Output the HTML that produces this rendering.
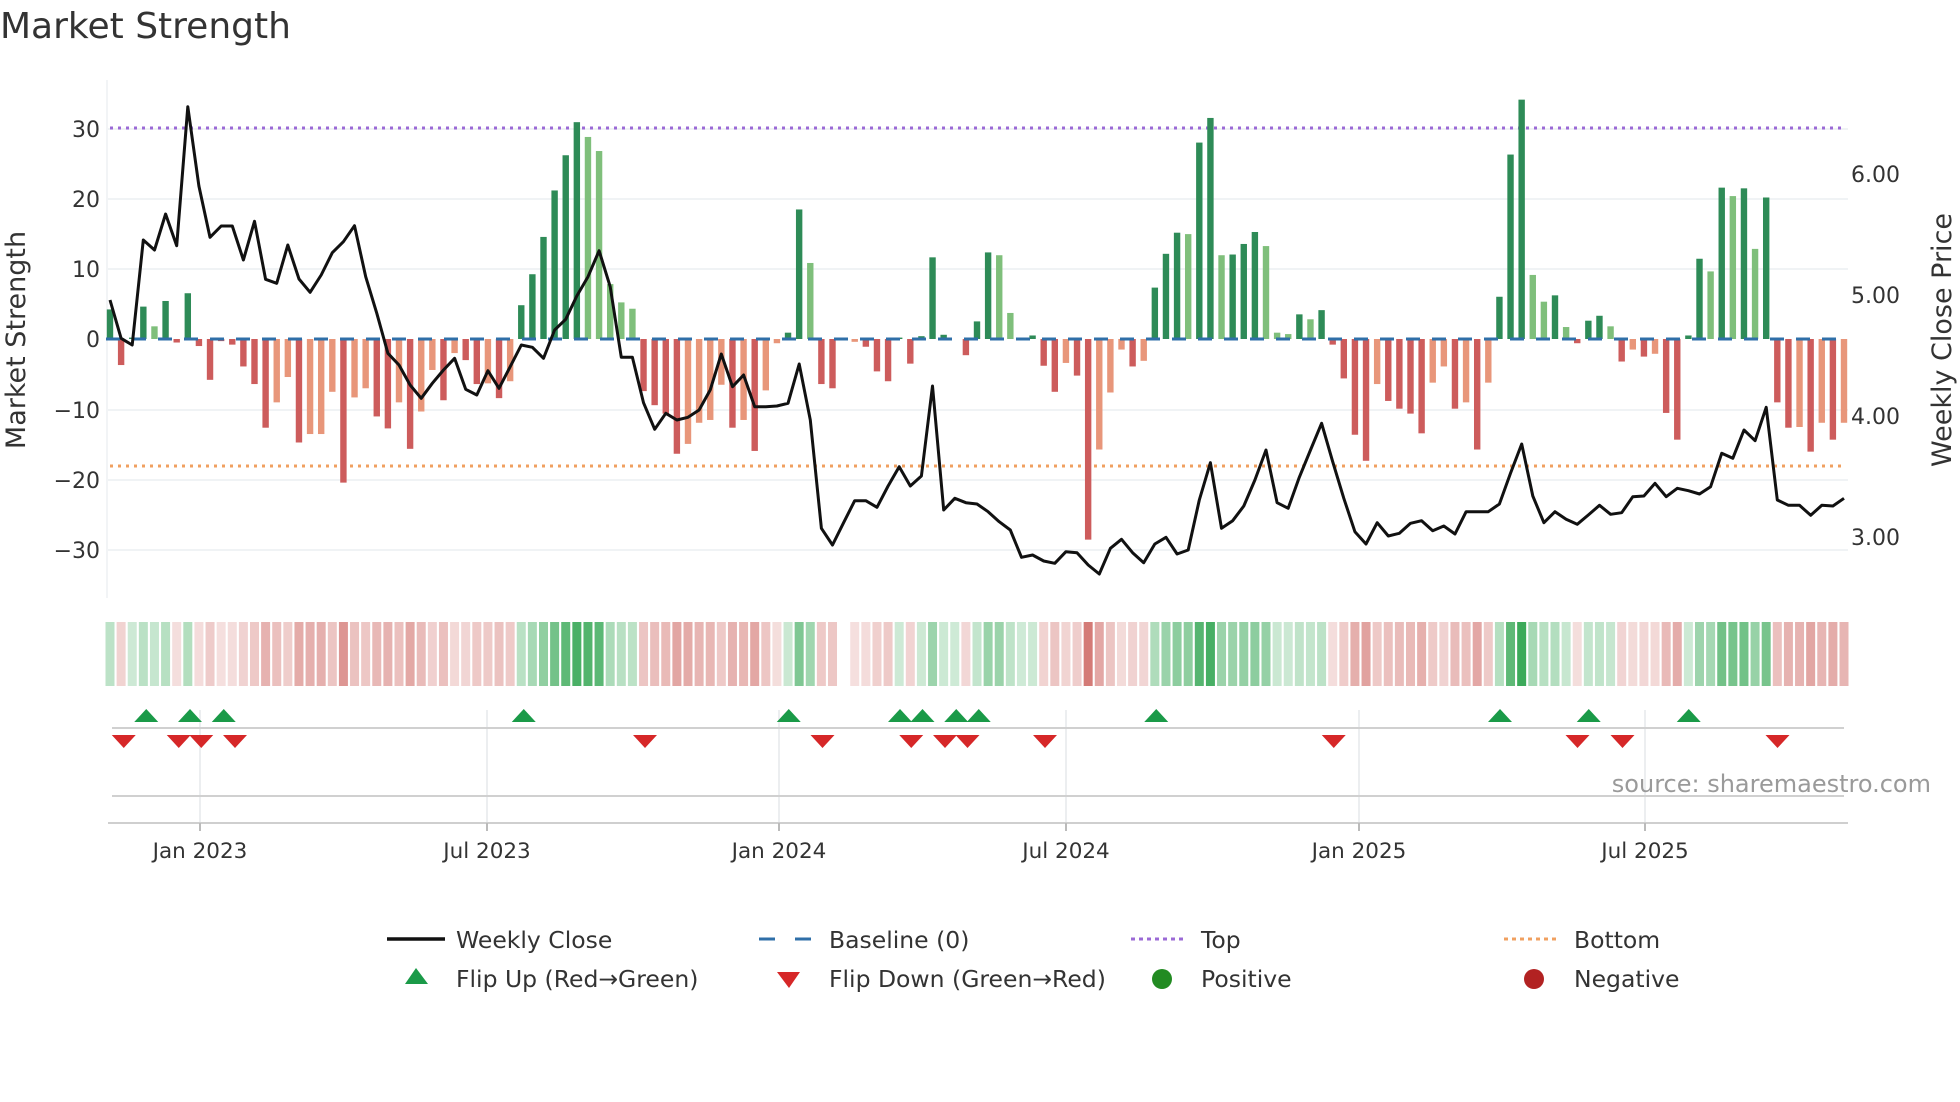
<!DOCTYPE html>
<html><head><meta charset="utf-8"><style>
html,body{margin:0;padding:0;background:#fff;width:1960px;height:1102px;overflow:hidden}
svg{display:block;font-family:"DejaVu Sans","Liberation Sans",sans-serif}
</style></head><body>
<svg id="s" width="1960" height="1102" viewBox="0 0 1960 1102" xmlns="http://www.w3.org/2000/svg">
<text x="0" y="38" font-size="36" fill="#333">Market Strength</text>
<g stroke="#eceff2" stroke-width="1.5">
<line x1="108" y1="129" x2="1848" y2="129"/><line x1="108" y1="199" x2="1848" y2="199"/>
<line x1="108" y1="269" x2="1848" y2="269"/><line x1="108" y1="410" x2="1848" y2="410"/>
<line x1="108" y1="480" x2="1848" y2="480"/><line x1="108" y1="550" x2="1848" y2="550"/>
</g>
<line x1="107" y1="80" x2="107" y2="598" stroke="#eef0f3" stroke-width="1.5"/>
<g font-size="22" fill="#333" text-anchor="end">
<text x="100" y="137">30</text><text x="100" y="207">20</text><text x="100" y="277">10</text>
<text x="100" y="347">0</text><text x="100" y="418">−10</text><text x="100" y="488">−20</text><text x="100" y="558">−30</text>
</g>
<g font-size="22" fill="#333">
<text x="1851" y="182">6.00</text><text x="1851" y="303">5.00</text><text x="1851" y="424">4.00</text><text x="1851" y="545">3.00</text>
</g>
<text transform="translate(25,340) rotate(-90)" font-size="27" fill="#333" text-anchor="middle">Market Strength</text>
<text transform="translate(1951,340) rotate(-90)" font-size="27" fill="#333" text-anchor="middle">Weekly Close Price</text>
<line x1="110" y1="128" x2="1846" y2="128" stroke="#9b6ad6" stroke-width="3" stroke-dasharray="3,5"/>
<line x1="110" y1="466" x2="1846" y2="466" stroke="#f0a060" stroke-width="3" stroke-dasharray="3,5"/>
<g id="bars"></g>
<line x1="106" y1="339" x2="1846" y2="339" stroke="#2f6fa8" stroke-width="3" stroke-dasharray="14,12"/>
<g id="line"></g>
<g id="heat"></g>
<g stroke="#e6e8eb" stroke-width="1.5">
<line x1="200" y1="710" x2="200" y2="823"/><line x1="487" y1="710" x2="487" y2="823"/><line x1="779" y1="710" x2="779" y2="823"/>
<line x1="1066" y1="710" x2="1066" y2="823"/><line x1="1359" y1="710" x2="1359" y2="823"/><line x1="1645" y1="710" x2="1645" y2="823"/>
</g>
<line x1="112" y1="728" x2="1844" y2="728" stroke="#d0d0d0" stroke-width="2"/>
<line x1="112" y1="796" x2="1844" y2="796" stroke="#d0d0d0" stroke-width="2"/>
<line x1="108" y1="823" x2="1848" y2="823" stroke="#cfcfcf" stroke-width="2"/>
<g id="marks"></g>
<g stroke="#bbb" stroke-width="2">
<line x1="200" y1="823" x2="200" y2="831"/><line x1="487" y1="823" x2="487" y2="831"/><line x1="779" y1="823" x2="779" y2="831"/>
<line x1="1066" y1="823" x2="1066" y2="831"/><line x1="1359" y1="823" x2="1359" y2="831"/><line x1="1645" y1="823" x2="1645" y2="831"/>
</g>
<g font-size="21.5" fill="#333" text-anchor="middle">
<text x="200" y="858">Jan 2023</text><text x="487" y="858">Jul 2023</text><text x="779" y="858">Jan 2024</text>
<text x="1066" y="858">Jul 2024</text><text x="1359" y="858">Jan 2025</text><text x="1645" y="858">Jul 2025</text>
</g>
<text x="1931" y="792" font-size="24" fill="#9a9a9a" text-anchor="end">source: sharemaestro.com</text>
<g font-size="23.5" fill="#333">
<line x1="387" y1="939" x2="445" y2="939" stroke="#111" stroke-width="3.5"/>
<text x="456" y="948">Weekly Close</text>
<line x1="759" y1="939" x2="814" y2="939" stroke="#2f6fa8" stroke-width="3" stroke-dasharray="16,20"/>
<text x="829" y="948">Baseline (0)</text>
<line x1="1131" y1="939" x2="1187" y2="939" stroke="#9b6ad6" stroke-width="3" stroke-dasharray="4,4"/>
<text x="1201" y="948">Top</text>
<line x1="1504" y1="939" x2="1560" y2="939" stroke="#f0a060" stroke-width="3" stroke-dasharray="4,4"/>
<text x="1574" y="948">Bottom</text>
<polygon points="416,968 405,984 428,984" fill="#1a9a48"/>
<text x="456" y="987">Flip Up (Red→Green)</text>
<polygon points="777,972 800,972 789,988" fill="#d62728"/>
<text x="829" y="987">Flip Down (Green→Red)</text>
<circle cx="1162" cy="979" r="10" fill="#228b22"/>
<text x="1201" y="987">Positive</text>
<circle cx="1534" cy="979" r="10" fill="#b22222"/>
<text x="1574" y="987">Negative</text>
</g>
</svg>
<script>
var V=[4.2,-3.7,0.2,4.6,1.8,5.4,-0.5,6.5,-1,-5.8,-0.3,-0.8,-3.9,-6.4,-12.6,-9,-5.4,-14.7,-13.5,-13.5,-7.5,-20.4,-8.3,-7,-11,-12.7,-9,-15.6,-10.3,-4.4,-8.7,-2,-3,-6.4,-6.3,-8.4,-6,4.8,9.2,14.5,21.1,26.1,30.8,28.7,26.7,7.8,5.2,4.3,-7.4,-9.4,-10.6,-16.3,-14.9,-11.9,-11.5,-6.5,-12.6,-11.5,-15.9,-7.3,-0.6,0.9,18.4,10.8,-6.4,-7,0,-0.4,-1.1,-4.6,-6,0.2,-3.5,0.4,11.6,0.6,0,-2.3,2.5,12.3,11.9,3.7,0,0.5,-3.8,-7.5,-3.4,-5.2,-28.5,-15.7,-7.6,-1.5,-3.9,-3.1,7.3,12.1,15.1,14.9,27.9,31.4,11.9,12,13.5,15.2,13.2,0.9,0.7,3.5,2.8,4.1,-0.8,-5.6,-13.6,-17.3,-6.4,-8.8,-9.9,-10.6,-13.4,-6.2,-3.9,-9.9,-9,-15.7,-6.2,6,26.2,34,9.1,5.3,6.2,1.7,-0.6,2.6,3.3,1.8,-3.2,-1.5,-2.5,-2.1,-10.5,-14.3,0.5,11.4,9.6,21.5,20.3,21.4,12.8,20.1,-9,-12.6,-12.5,-16,-11.9,-14.3,-11.9];
var light={4:1,15:1,16:1,18:1,19:1,20:1,22:1,23:1,26:1,28:1,29:1,31:1,34:1,36:1,43:1,44:1,45:1,46:1,47:1,52:1,53:1,54:1,55:1,57:1,59:1,60:1,63:1,67:1,80:1,81:1,86:1,89:1,90:1,91:1,93:1,97:1,100:1,104:1,105:1,106:1,108:1,114:1,119:1,120:1,122:1,124:1,128:1,129:1,131:1,135:1,137:1,139:1,144:1,146:1,148:1,152:1,154:1,156:1};
var Y1=[660,775,795,480,510,402,497,80,318,472,438,438,540,424,598,610,495,597,637,585,518,485,437,590,700,820,855,915,955,910,870,835,928,945,872,925,860,795,802,835,750,718,648,590,512,620,832,832,968,1048,1000,1020,1012,990,930,822,920,885,980,980,978,970,852,1020,1345,1395,1328,1262,1262,1282,1218,1160,1218,1188,918,1290,1255,1268,1272,1295,1325];
var Y2=[1350,1432,1425,1443,1450,1415,1418,1455,1482,1405,1378,1418,1448,1392,1372,1422,1410,1260,1148,1345,1322,1278,1200,1110,1268,1285,1192,1110,1030,1145,1255,1355,1392,1328,1368,1360,1330,1322,1352,1338,1362,1295,1295,1295,1272,1180,1092,1248,1328,1295,1318,1333,1305,1276,1303,1298,1250,1248,1210,1250,1225,1232,1242,1220,1120,1135,1050,1082,982,1260,1276,1276,1306,1276,1278,1255];
var NS="http://www.w3.org/2000/svg";
function el(t,a,p){var e=document.createElementNS(NS,t);for(var k in a)e.setAttribute(k,a[k]);p.appendChild(e);return e;}
var bars=document.getElementById('bars'),heat=document.getElementById('heat'),lg=document.getElementById('line'),mk=document.getElementById('marks');
var step=(1844-110)/156;
for(var i=0;i<V.length;i++){
 var v=V[i],x=110+step*i,h=Math.abs(v)*7.04;
 var c;
 if(v>=0)c=light[i]?'#7fbf7b':'#2e8b57';else c=light[i]?'#e8967a':'#cd5c5c';
 if(h>0.5)el('rect',{x:x-3.2,y:v>=0?339-h:339,width:6.4,height:h},bars).setAttribute('fill',c);
 var hc;
 if(v>=0){hc='rgba(60,170,90,'+(0.25+0.75*Math.min(1,v/34))+')';}
 else{hc='rgba(205,100,95,'+(0.2+0.65*Math.min(1,-v/28))+')';}
 if(i!=66)el('rect',{x:x-4.5,y:622,width:9,height:64,fill:hc},heat);
}
var pts=[];
for(var i=0;i<Y1.length;i++){pts.push((110+step*i).toFixed(1)+','+(80+Y1[i]/3).toFixed(1));}
for(var j=0;j<Y2.length;j++){var i2=81+j;pts.push((110+step*i2).toFixed(1)+','+(80+Y2[j]/3).toFixed(1));}
el('polyline',{points:pts.join(' '),fill:'none',stroke:'#111','stroke-width':3,'stroke-linejoin':'round'},lg);
var up=[117,152,179,419,631,720,738,765,783,925,1200,1271,1351],dn=[99,143,161,188,516,658,729,756,774,836,1067,1262,1298,1422];
up.forEach(function(d){var x=d*1.25;el('polygon',{points:(x)+',709 '+(x-12)+',722 '+(x+12)+',722',fill:'#1a9a48'},mk);});
dn.forEach(function(d){var x=d*1.25;el('polygon',{points:(x-12)+',735 '+(x+12)+',735 '+x+',748',fill:'#d62728'},mk);});
</script>
</body></html>
